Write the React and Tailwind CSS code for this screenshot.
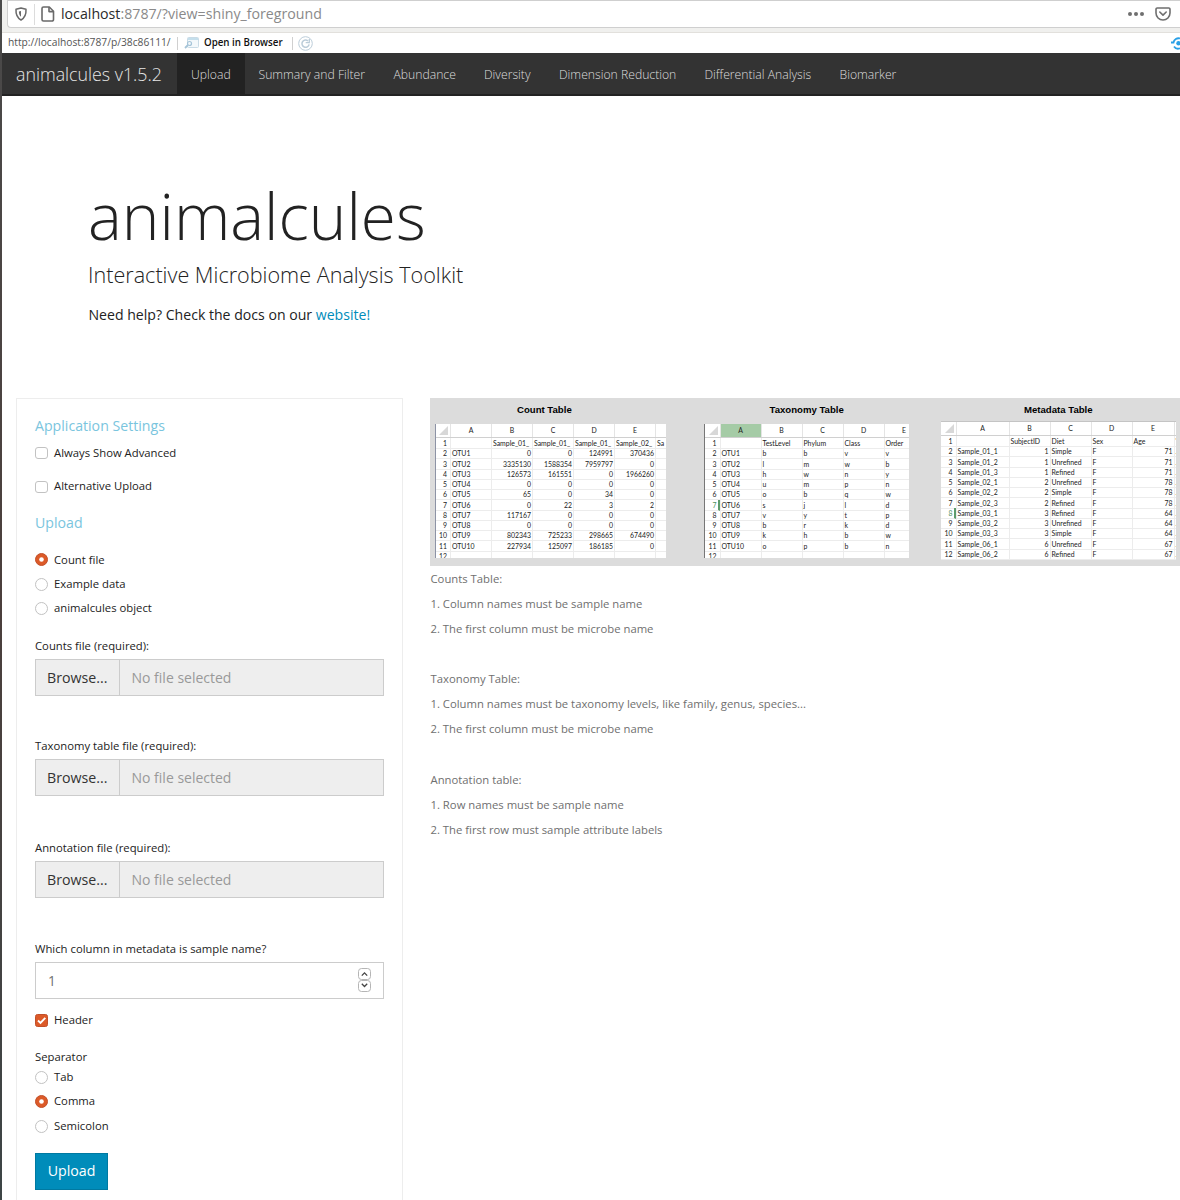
import clsx from 'clsx';

const NAV_ITEMS = [
  { label: 'Upload', width: 'w-[67.500px]', active: true },
  { label: 'Summary and Filter', width: 'w-[135px]' },
  { label: 'Abundance', width: 'w-[90.500px]' },
  { label: 'Diversity', width: 'w-[75px]' },
  { label: 'Dimension Reduction', width: 'w-[145.500px]' },
  { label: 'Differential Analysis', width: 'w-[135px]' },
  { label: 'Biomarker', width: 'w-[85px]' },
];

const COUNT_ROWS = [
  ['', 'Sample_01_', 'Sample_01_', 'Sample_01_', 'Sample_02_', 'Sa'],
  ['OTU1', '0', '0', '124991', '370436', ''],
  ['OTU2', '3335130', '1588354', '7959797', '0', ''],
  ['OTU3', '126573', '161551', '0', '1966260', ''],
  ['OTU4', '0', '0', '0', '0', ''],
  ['OTU5', '65', '0', '34', '0', ''],
  ['OTU6', '0', '22', '3', '2', ''],
  ['OTU7', '117167', '0', '0', '0', ''],
  ['OTU8', '0', '0', '0', '0', ''],
  ['OTU9', '802343', '725233', '298665', '674490', ''],
  ['OTU10', '227934', '125097', '186185', '0', ''],
  ['', '', '', '', '', ''],
];

const TAXONOMY_ROWS = [
  ['', 'TestLevel', 'Phylum', 'Class', 'Order'],
  ['OTU1', 'b', 'b', 'v', 'v'],
  ['OTU2', 'l', 'm', 'w', 'b'],
  ['OTU3', 'h', 'w', 'n', 'y'],
  ['OTU4', 'u', 'm', 'p', 'n'],
  ['OTU5', 'o', 'b', 'q', 'w'],
  ['OTU6', 's', 'j', 'l', 'd'],
  ['OTU7', 'v', 'y', 't', 'p'],
  ['OTU8', 'b', 'r', 'k', 'd'],
  ['OTU9', 'k', 'h', 'b', 'w'],
  ['OTU10', 'o', 'p', 'b', 'n'],
  ['', '', '', '', ''],
];

const METADATA_ROWS = [
  ['', 'SubjectID', 'Diet', 'Sex', 'Age', '\''],
  ['Sample_01_1', '1', 'Simple', 'F', '71', '.'],
  ['Sample_01_2', '1', 'Unrefined', 'F', '71', '.'],
  ['Sample_01_3', '1', 'Refined', 'F', '71', '.'],
  ['Sample_02_1', '2', 'Unrefined', 'F', '78', '.'],
  ['Sample_02_2', '2', 'Simple', 'F', '78', '.'],
  ['Sample_02_3', '2', 'Refined', 'F', '78', '.'],
  ['Sample_03_1', '3', 'Refined', 'F', '64', '.'],
  ['Sample_03_2', '3', 'Unrefined', 'F', '64', '.'],
  ['Sample_03_3', '3', 'Simple', 'F', '64', '.'],
  ['Sample_06_1', '6', 'Unrefined', 'F', '67', '.'],
  ['Sample_06_2', '6', 'Refined', 'F', '67', '.'],
];

const NOTES = [
  { title: 'Counts Table:', lines: ['1. Column names must be sample name', '2. The first column must be microbe name'] },
  {
    title: 'Taxonomy Table:',
    lines: ['1. Column names must be taxonomy levels, like family, genus, species...', '2. The first column must be microbe name'],
  },
  { title: 'Annotation table:', lines: ['1. Row names must be sample name', '2. The first row must sample attribute labels'] },
];

export default function App() {
  return (
    <div className="flex h-[1200px] w-[1180px] overflow-hidden bg-white font-['Open_Sans','Noto_Sans',sans-serif] text-[#222]">
      <div className="w-[2px] shrink-0 bg-linear-to-b from-[#4a4a4a] via-[#4b3f3c] to-[#3d4546]" />
      <div className="min-w-0 flex-1">
        <AddressBar />
        <ViewerBar />
        <Navbar />
        <header className="h-[302px] pt-[76px] pl-[86px]">
          <h1 className="h-[88px] text-[63.8px] leading-[88px] font-light whitespace-nowrap">animalcules</h1>
          <p className="mt-px h-[28px] text-[21.6px] leading-[28px] font-light whitespace-nowrap">Interactive Microbiome Analysis Toolkit</p>
          <p className="mt-[14px] pl-[0.5px] text-[14.1px] leading-[24px] whitespace-nowrap">
            Need help? Check the docs on our <a className="text-[#008cba]">website!</a>
          </p>
        </header>
        <main className="flex pl-[14px]">
          <Sidebar />
          <section className="ml-[27px] w-[751px] shrink-0">
            <ExampleTables />
            <div className="pl-[0.5px] text-[11.3px] leading-[25.1px] text-[#6f6f6f]">
              {NOTES.map((note) => (
                <div key={note.title} className="mb-[25px]">
                  <p>{note.title}</p>
                  {note.lines.map((line) => (
                    <p key={line}>{line}</p>
                  ))}
                </div>
              ))}
            </div>
          </section>
        </main>
      </div>
    </div>
  );
}

function AddressBar() {
  return (
    <div className="h-[32px] bg-[#f0f0ee]">
      <div className="ml-[5px] flex h-[28px] items-center rounded-bl-[4px] border-t border-b border-l border-[#cfcfcf] bg-white pr-[9px] pl-[6px]">
        <ShieldIcon className="h-[14px] w-[14px]" />
        <span className="ml-[6px] h-[21px] w-px bg-[#dcdcdc]" />
        <PageIcon className="ml-[6px] h-[16px] w-[14px]" />
        <span className="ml-[6px] text-[14.2px] text-[#8a8a8a]">
          <span className="text-[#2a2a2a]">localhost</span>:8787/?view=shiny_foreground
        </span>
        <span className="ml-auto flex gap-[2px]">
          {[0, 1, 2].map((i) => (
            <span key={i} className="h-[4px] w-[4px] rounded-full bg-[#6f6f6f]" />
          ))}
        </span>
        <PocketIcon className="ml-[11px] h-[14px] w-[16px]" />
      </div>
    </div>
  );
}

function ViewerBar() {
  return (
    <div className="flex h-[21px] items-center overflow-hidden border-t border-[#e2e0dc] bg-white pl-[6px] whitespace-nowrap">
      <span className="w-[163px] text-[10.25px] text-[#555]">http://localhost:8787/p/38c86111/</span>
      <span className="ml-[6px] h-[13px] w-px bg-[#d0d0d0]" />
      <PopoutIcon className="ml-[6px] h-[12px] w-[15px]" />
      <span className="ml-[5px] w-[80px] text-[9.75px] font-semibold text-[#111]">Open in Browser</span>
      <span className="ml-[8px] h-[13px] w-px bg-[#d0d0d0]" />
      <RefreshIcon className="ml-[5px] h-[15px] w-[15px]" />
      <PublishIcon className="ml-auto h-[14px] w-[10px]" />
    </div>
  );
}

function Navbar() {
  return (
    <nav className="flex h-[43px] items-center border-b-2 border-[#222] bg-[#333] font-light whitespace-nowrap">
      <span className="w-[175px] pt-[2px] pl-[14px] text-[17.8px] text-[#e6e6e6]">animalcules v1.5.2</span>
      {NAV_ITEMS.map((item) => (
        <a
          key={item.label}
          className={clsx('flex h-[42px] items-center pt-[3px] pl-[14px] text-[12.2px] text-[#dedede]', item.width, item.active && 'bg-[#222]')}
        >
          {item.label}
        </a>
      ))}
    </nav>
  );
}

function Sidebar() {
  return (
    <aside className="h-[830px] w-[387px] shrink-0 border border-[#ededed] px-[18px] pt-[15px] text-[11.3px] text-[#222]">
      <h4 className="h-[24px] text-[14.15px] leading-[24px] text-[#7ac5de]">Application Settings</h4>
      <div className="mt-[3px] flex flex-col gap-[9px]">
        <Choice label="Always Show Advanced" />
        <Choice label="Alternative Upload" />
      </div>
      <h4 className="mt-[12px] h-[24px] text-[14.15px] leading-[24px] text-[#7ac5de]">Upload</h4>
      <div className="mt-[13px]">
        <Choice round checked label="Count file" />
        <Choice round label="Example data" />
        <Choice round label="animalcules object" />
      </div>
      <FileField className="mt-[13px]" label="Counts file (required):" />
      <FileField className="mt-[38.500px]" label="Taxonomy table file (required):" />
      <FileField className="mt-[39.500px]" label="Annotation file (required):" />
      <p className="mt-[39px] h-[25px] leading-[24px]">Which column in metadata is sample name?</p>
      <div className="flex h-[37px] items-center justify-between border border-[#ccc] pr-[12px] pl-[12px] text-[13.6px] text-[#6f6f6f]">
        <span className="pt-[2px]">1</span>
        <Stepper />
      </div>
      <div className="mt-[9px]">
        <Choice checked label="Header" />
      </div>
      <p className="mt-[15px] h-[20px] leading-[20px]">Separator</p>
      <div className="-mt-[2px]">
        <Choice round label="Tab" />
        <Choice round checked label="Comma" />
        <Choice round label="Semicolon" />
      </div>
      <button className="mt-[14px] h-[37px] w-[73px] border border-[#0079a1] bg-[#008cba] text-[14.2px] text-white">Upload</button>
    </aside>
  );
}

function Choice({ label, round, checked }) {
  return (
    <label className="flex h-[24.4px] items-center gap-[6px]">
      {checked ? (
        <svg viewBox="0 0 13 13" className="h-[13px] w-[13px]">
          {round ? (
            <>
              <circle cx="6.5" cy="6.5" r="6" fill="#dc5a28" stroke="#c2502a" />
              <circle cx="6.5" cy="6.5" r="2.3" fill="#fff" />
            </>
          ) : (
            <>
              <rect x="0.5" y="0.5" width="12" height="12" rx="2" fill="#dc5a28" stroke="#c2502a" />
              <path d="m3 6.5 2.5 2.5L10.3 3.8" fill="none" stroke="#fff" strokeWidth="1.9" />
            </>
          )}
        </svg>
      ) : (
        <span className={clsx('w-[13px] border border-[#c2c2c2] bg-white', round ? 'h-[13px] rounded-full' : 'h-[12px] rounded-[3px]')} />
      )}
      <span>{label}</span>
    </label>
  );
}

function FileField({ label, className }) {
  return (
    <div className={className}>
      <p className="h-[25px] leading-[24px]">{label}</p>
      <div className="flex h-[37px] items-center border border-[#ccc] bg-[#eee] text-[14px]">
        <span className="flex h-full w-[84px] items-center border-r border-[#ccc] pl-[11px] text-[14.2px] text-[#333]">Browse...</span>
        <span className="pl-[11.500px] text-[#999]">No file selected</span>
      </div>
    </div>
  );
}

function ExampleTables() {
  return (
    <div className="flex h-[168px] items-start overflow-hidden bg-[#dcdcdc] pl-[5px]">
      <div className="w-[268.500px]">
        <TableTitle className="pl-[82px]">Count Table</TableTitle>
        <Sheet
          className="w-[231px] border-l border-[#8d93a5]"
          columns="grid-cols-[14px_41px_41px_41px_41px_41px_11px]"
          letters={['A', 'B', 'C', 'D', 'E', '']}
          rows={COUNT_ROWS}
          numeric={[1, 2, 3, 4]}
        />
      </div>
      <div className="w-[237.500px]">
        <TableTitle className="pl-[66px]">Taxonomy Table</TableTitle>
        <Sheet
          className="w-[205px] border-l border-[#777]"
          columns="grid-cols-[15px_41px_41px_41px_41px_40px]"
          letters={['A', 'B', 'C', 'D', 'E']}
          rows={TAXONOMY_ROWS}
          numeric={[]}
          selectedColumn={0}
          selectedRow={7}
        />
      </div>
      <div className="w-[235px]">
        <TableTitle className="pl-[83px]">Metadata Table</TableTitle>
        <Sheet
          className="-mt-[3px] w-[235px] border-t border-[#c4c4c4]"
          columns="grid-cols-[14.5px_53px_41px_41px_41px_42px_3px]"
          letters={['A', 'B', 'C', 'D', 'E', '']}
          rows={METADATA_ROWS}
          numeric={[1, 4]}
          selectedRow={8}
          tall
        />
      </div>
    </div>
  );
}

function TableTitle({ children, className }) {
  return (
    <h5 className={clsx("h-[26px] pt-[1px] font-['Liberation_Sans',Arial,sans-serif] text-[9.6px] leading-[22px] font-bold whitespace-nowrap text-black", className)}>
      {children}
    </h5>
  );
}

// Small spreadsheet preview. Header labels over text columns are left aligned.
function Sheet({ className, columns, letters, rows, numeric, selectedColumn, selectedRow, tall }) {
  return (
    <div
      className={clsx(
        "overflow-hidden bg-white font-['Lato','Open_Sans',sans-serif] text-[6.9px] whitespace-nowrap text-[#222]",
        tall ? 'h-[139px]' : 'h-[134px]',
        className,
      )}
    >
      <div className={clsx('grid h-[14px] border-b border-[#d0d0d0]', columns)}>
        <span className="flex items-end justify-end p-[2px]">
          <svg viewBox="0 0 9 9" className="h-[9px] w-[9px]">
            <path d="M9 0v9H0z" fill="#d8d8d8" />
          </svg>
        </span>
        {letters.map((letter, i) => (
          <span
            key={i}
            className={clsx('flex items-center justify-center border-l border-[#e4e4e4]', i === selectedColumn && 'bg-[#a5cba6]')}
          >
            {letter}
          </span>
        ))}
      </div>
      {rows.map((row, r) => (
        <div key={r} className={clsx('grid h-[10.25px] leading-[10px]', columns)}>
          <span
            className={clsx(
              'border-b border-[#ececec] pr-[3px] text-right',
              r + 1 === selectedRow && 'border-r-2 border-r-[#5d9c6c] pr-px text-[#4c8f5c]',
            )}
          >
            {r + 1}
          </span>
          {row.map((cell, c) => (
            <span
              key={c}
              className={clsx(
                'border-b border-l border-[#ececec] px-px',
                numeric.includes(c) && r > 0 && 'text-right',
              )}
            >
              {cell}
            </span>
          ))}
        </div>
      ))}
    </div>
  );
}

function Stepper() {
  return (
    <svg viewBox="0 0 13 24" fill="none" className="h-[24px] w-[13px]">
      <rect x="0.5" y="0.5" width="12" height="11" rx="3" stroke="#b5b5b5" />
      <rect x="0.5" y="12.5" width="12" height="11" rx="3" stroke="#b5b5b5" />
      <path d="m3.8 7.6 2.7-2.7 2.7 2.7M3.8 15.8l2.7 2.7 2.7-2.7" stroke="#444" strokeWidth="1.3" />
    </svg>
  );
}

function ShieldIcon(props) {
  return (
    <svg viewBox="0 0 14 14" fill="none" stroke="#6a6a6a" strokeWidth="1.5" {...props}>
      <path d="M7 1 12 2.3c.3 5-1.2 8.6-5 10.7C3.2 10.9 1.7 7.3 2 2.3z" strokeLinejoin="round" />
      <path d="M7 4v5.8C5.4 8.5 4.9 6.8 4.900 4.500z" fill="#6a6a6a" stroke="none" />
    </svg>
  );
}

function PageIcon(props) {
  return (
    <svg viewBox="0 0 14 16" fill="none" stroke="#6a6a6a" strokeWidth="1.6" strokeLinejoin="round" {...props}>
      <path d="M2.5 1h5.8L12.5 5.2v8.3a1.5 1.5 0 0 1-1.5 1.5H2.5A1.5 1.5 0 0 1 1 13.5v-11A1.5 1.5 0 0 1 2.5 1z" />
      <path d="M8 1v4.6h4.5" />
    </svg>
  );
}

function PocketIcon(props) {
  return (
    <svg viewBox="0 0 16 14" fill="none" stroke="#6f6f6f" strokeWidth="1.6" strokeLinecap="round" strokeLinejoin="round" {...props}>
      <path d="M2.2 1h11.6a1.2 1.2 0 0 1 1.2 1.2V6a7 7 0 0 1-14 0V2.2A1.2 1.2 0 0 1 2.2 1z" />
      <path d="m4.8 5 3.2 3.1L11.2 5" />
    </svg>
  );
}

function PopoutIcon(props) {
  return (
    <svg viewBox="0 0 15 12" fill="none" {...props}>
      <rect x="3.5" y="0.5" width="11" height="10" rx="1" fill="#f3f8fb" stroke="#c9dbe6" />
      <path d="M4 1h10v2H4z" fill="#c5dfec" />
      <path d="M1 11 4 8" stroke="#a5c4d8" strokeWidth="1.8" />
      <circle cx="5.5" cy="6.5" r="2" stroke="#a5c4d8" strokeWidth="1.2" />
    </svg>
  );
}

function RefreshIcon(props) {
  return (
    <svg viewBox="0 0 15 15" fill="none" stroke="#bccdd9" {...props}>
      <circle cx="7.5" cy="7.5" r="6.8" />
      <path d="M10 5a3.6 3.6 0 1 0 1.1 3.3" strokeWidth="1.5" />
      <path d="M11.3 3v3.7H7.7" strokeWidth="1.3" />
    </svg>
  );
}

function PublishIcon(props) {
  return (
    <svg viewBox="0 0 10 14" fill="none" stroke="#2aa0e6" strokeWidth="1.8" {...props}>
      <path d="M1 6.5h2.5A5 5 0 0 1 10 2.5M4 10.500a5 5 0 0 0 6 1.800" />
      <circle cx="8.5" cy="7.3" r="2.2" fill="#2aa0e6" stroke="none" />
    </svg>
  );
}
